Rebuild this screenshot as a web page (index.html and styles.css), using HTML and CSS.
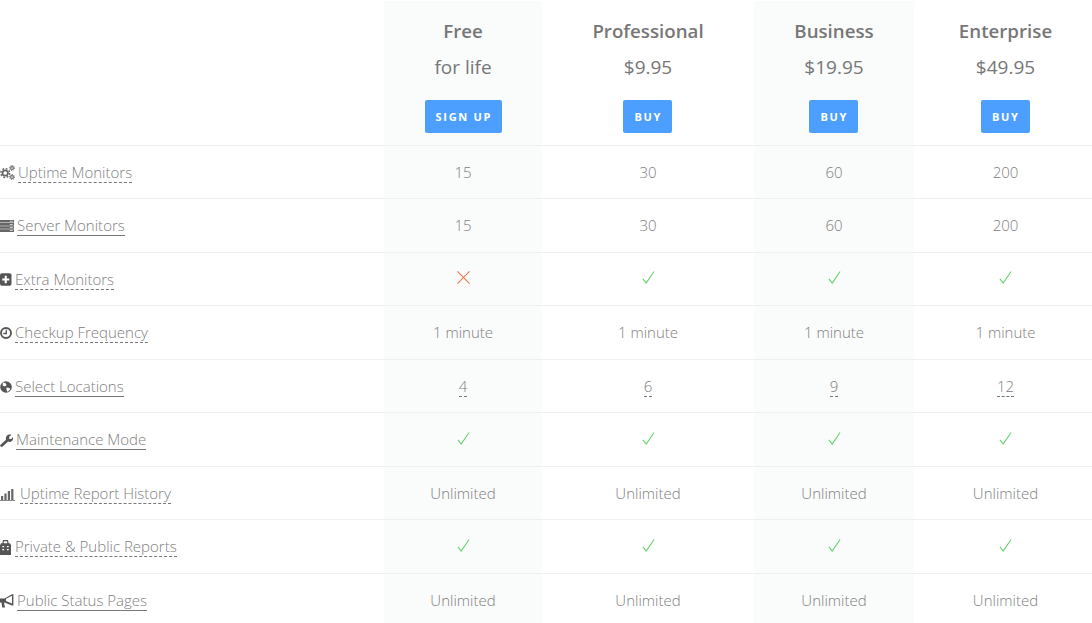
FILE: index.html
```html
<!DOCTYPE html>
<html lang="en">
<head>
<meta charset="utf-8">
<title>Pricing</title>
<link rel="stylesheet" href="styles.css">
</head>
<body>
<main class="plans">
  <div class="row head">
    <div class="cell label"></div>
    <div class="cell shade plan"><h2>Free</h2><p>for life</p><a class="btn">SIGN UP</a></div>
    <div class="cell plan"><h2>Professional</h2><p>$9.95</p><a class="btn buy">BUY</a></div>
    <div class="cell shade plan"><h2>Business</h2><p>$19.95</p><a class="btn buy">BUY</a></div>
    <div class="cell plan"><h2>Enterprise</h2><p>$49.95</p><a class="btn buy">BUY</a></div>
  </div>

  <div class="row">
    <div class="cell label">
      <svg class="ico i-cog" viewBox="0 0 15 15"><g fill="none" stroke="#666"><circle cx="5.200" cy="8" r="2.700" stroke-width="1.700"/><circle cx="5.200" cy="8" r="4.400" stroke-width="1.500" stroke-dasharray="1.800 1.660"/><circle cx="12" cy="3" r="1.400" stroke-width="1.100"/><circle cx="12" cy="3" r="2.500" stroke-width="1" stroke-dasharray="1 .96"/><circle cx="12" cy="12" r="1.400" stroke-width="1.100"/><circle cx="12" cy="12" r="2.500" stroke-width="1" stroke-dasharray="1 .96"/></g></svg>
      <a class="term dash">Uptime Monitors</a>
    </div>
    <div class="cell shade">15</div><div class="cell">30</div><div class="cell shade">60</div><div class="cell">200</div>
  </div>

  <div class="row">
    <div class="cell label">
      <svg class="ico i-server" viewBox="0 0 14 12"><path fill="#666" d="M0 0h14v2.600H0zM0 3.100h14v2.600H0zM0 6.200h14v2.600H0zM0 9.300h14V12H0z"/><path fill="#ccc" d="M9.800.8h3v1h-3zM9.800 3.900h3v1h-3zM9.800 7h3v1h-3zM9.800 10.100h3v1h-3z"/></svg>
      <a class="term solid">Server Monitors</a>
    </div>
    <div class="cell shade">15</div><div class="cell">30</div><div class="cell shade">60</div><div class="cell">200</div>
  </div>

  <div class="row">
    <div class="cell label">
      <svg class="ico i-plus" viewBox="0 0 12 13"><rect width="11.500" height="12.500" y=".2" rx="2" fill="#555"/><path fill="#fff" d="M4.700 2.700h2.100v2.700h2.500v2.200H6.800v2.700H4.700V7.600H2.200V5.400h2.500z"/></svg>
      <a class="term dash">Extra Monitors</a>
    </div>
    <div class="cell shade"><svg class="mark" viewBox="0 0 14 14"><path d="M.5.500l13 13M13.500.500l-13 13" stroke="#e8764e" stroke-width="1.100" fill="none"/></svg></div>
    <div class="cell"><svg class="mark" viewBox="0 0 14 14"><use href="#tick"/></svg></div>
    <div class="cell shade"><svg class="mark" viewBox="0 0 14 14"><use href="#tick"/></svg></div>
    <div class="cell"><svg class="mark" viewBox="0 0 14 14"><use href="#tick"/></svg></div>
  </div>

  <div class="row">
    <div class="cell label">
      <svg class="ico i-round" viewBox="0 0 12 12"><circle cx="6" cy="6" r="5" fill="none" stroke="#555" stroke-width="1.900"/><path d="M6.300 2.800v3.700H3.300" fill="none" stroke="#555" stroke-width="1.300"/></svg>
      <a class="term dash">Checkup Frequency</a>
    </div>
    <div class="cell shade">1 minute</div><div class="cell">1 minute</div><div class="cell shade">1 minute</div><div class="cell">1 minute</div>
  </div>

  <div class="row">
    <div class="cell label">
      <svg class="ico i-round" viewBox="0 0 12 12"><circle cx="6" cy="6" r="5.800" fill="#555"/><path fill="#fff" d="M3 1.600l2.600.7 1 1.600-1.600 1.600-2.400-.9zM6.300 6.400l3.200.5.700 1.300-2.500 2.700-1-1.700z"/></svg>
      <a class="term solid">Select Locations</a>
    </div>
    <div class="cell shade"><a class="term dash val">4</a></div><div class="cell"><a class="term dash val">6</a></div><div class="cell shade"><a class="term dash val">9</a></div><div class="cell"><a class="term dash val">12</a></div>
  </div>

  <div class="row">
    <div class="cell label">
      <svg class="ico i-wrench" viewBox="0 0 13 13"><path fill="#555" d="M.3 11L6 5.700C5.600 3.900 6.100 1.700 8.100.8c1.300-.6 2.600-.4 3.400 0L9 3l.5 1.900 1.800.2L13 2.900c.4 1.700 0 3.300-1.300 4.300-1.100.8-2.400.9-3.500.4L2.400 12.800c-.9.600-3-.7-2.100-1.800z"/></svg>
      <a class="term solid">Maintenance Mode</a>
    </div>
    <div class="cell shade"><svg class="mark" viewBox="0 0 14 14"><use href="#tick"/></svg></div>
    <div class="cell"><svg class="mark" viewBox="0 0 14 14"><use href="#tick"/></svg></div>
    <div class="cell shade"><svg class="mark" viewBox="0 0 14 14"><use href="#tick"/></svg></div>
    <div class="cell"><svg class="mark" viewBox="0 0 14 14"><use href="#tick"/></svg></div>
  </div>

  <div class="row">
    <div class="cell label">
      <svg class="ico i-chart" viewBox="0 0 15 12"><path fill="#666" d="M1 7h2.200v4H1zM4.400 4.500h2.200V11H4.400zM7.800 2h2.200v9H7.800zM11.200 0h2.200v11h-2.200zM0 11.200h15v.8H0z"/></svg>
      <a class="term dash">Uptime Report History</a>
    </div>
    <div class="cell shade">Unlimited</div><div class="cell">Unlimited</div><div class="cell shade">Unlimited</div><div class="cell">Unlimited</div>
  </div>

  <div class="row">
    <div class="cell label">
      <svg class="ico i-case" viewBox="0 0 11 15"><path fill="#555" fill-rule="evenodd" d="M3 0h5l.7 3.200H10l1 2V15H0V5.200l1-2h1.300zM4 1.200L3.600 3.200h3.800L7 1.200zM2.300 6v1.200h1.800V6zM6.900 6v1.200h1.800V6zM2.300 9v1.200h1.800V9zM6.900 9v1.200h1.800V9z"/></svg>
      <a class="term dash">Private &amp; Public Reports</a>
    </div>
    <div class="cell shade"><svg class="mark" viewBox="0 0 14 14"><use href="#tick"/></svg></div>
    <div class="cell"><svg class="mark" viewBox="0 0 14 14"><use href="#tick"/></svg></div>
    <div class="cell shade"><svg class="mark" viewBox="0 0 14 14"><use href="#tick"/></svg></div>
    <div class="cell"><svg class="mark" viewBox="0 0 14 14"><use href="#tick"/></svg></div>
  </div>

  <div class="row">
    <div class="cell label">
      <svg class="ico i-horn" viewBox="0 0 14 14"><path fill="#555" d="M0 4.500h4.500L12 .3h1.400V11.500H12L4.500 8.500H4l1 5H2.200L1.500 8.500H0z"/><path fill="#fff" d="M6 4.800l6-3v7.600l-6-2.300z"/></svg>
      <a class="term solid">Public Status Pages</a>
    </div>
    <div class="cell shade">Unlimited</div><div class="cell">Unlimited</div><div class="cell shade">Unlimited</div><div class="cell">Unlimited</div>
  </div>
</main>
<svg class="defs" aria-hidden="true"><defs><path id="tick" d="M1 8.500l3.500 4.500L13 .5" fill="none" stroke="#5fd068" stroke-width="1.100"/></defs></svg>
</body>
</html>
```
FILE: styles.css
```css
* { box-sizing: border-box; }
html, body { margin: 0; height: 623px; overflow: hidden; background: #fff; }
body { font-family: "Open Sans", sans-serif; font-weight: 300; font-size: 15px; color: #808080; }
.plans { padding-top: 1px; width: 1097px; }
.row {
  display: grid;
  grid-template-columns: 384px 158px 212px 160px 183px;
  height: 53.5px;
  border-bottom: 1px solid #eff1f1;
}
.row.head { height: 144.5px; }
.cell { display: flex; align-items: center; justify-content: center; height: 100%; white-space: nowrap; }
.shade { background: #fafbfb; }
.label { justify-content: flex-start; gap: 4px; padding-top: 2px; }
.plan { flex-direction: column; justify-content: flex-start; }
.plan h2 { margin: 18px 0 0; font-size: 18.7px; line-height: 24px; font-weight: 600; color: #777; }
.plan p { margin: 12px 0 0; font-size: 19px; line-height: 24px; font-weight: 400; color: #777; }
.btn {
  display: block;
  margin-top: 21px;
  width: 77px;
  height: 33px;
  padding-left: 1.7px;
  line-height: 33px;
  text-align: center;
  background: #4d9fff;
  border-radius: 2px;
  color: #fff;
  font-size: 11px;
  font-weight: 700;
  letter-spacing: 1.7px;
}
.btn.buy { width: 49px; margin-left: -1px; }
.term { line-height: 19px; display: block; }
.val { margin-top: 2px; }
.dash { border-bottom: 1px dashed #777; }
.solid { border-bottom: 1px solid #777; }
.ico { display: block; flex: none; }
.i-cog { width: 15px; height: 15px; margin-right: -1px; }
.i-server { width: 14px; height: 12px; margin-right: -1px; }
.i-plus { width: 12px; height: 13px; margin-right: -1px; }
.i-round { width: 12px; height: 12px; margin-right: -1px; }
.i-wrench { width: 13px; height: 13px; margin-right: -1px; }
.i-chart { width: 15px; height: 12px; margin-top: 2px; margin-right: 1px; }
.i-case { width: 11px; height: 15px; }
.i-horn { width: 14px; height: 14px; margin-right: -1px; }
.mark { display: block; width: 13px; height: 13px; margin-top: -2px; }
.defs { position: absolute; width: 0; height: 0; }
```
